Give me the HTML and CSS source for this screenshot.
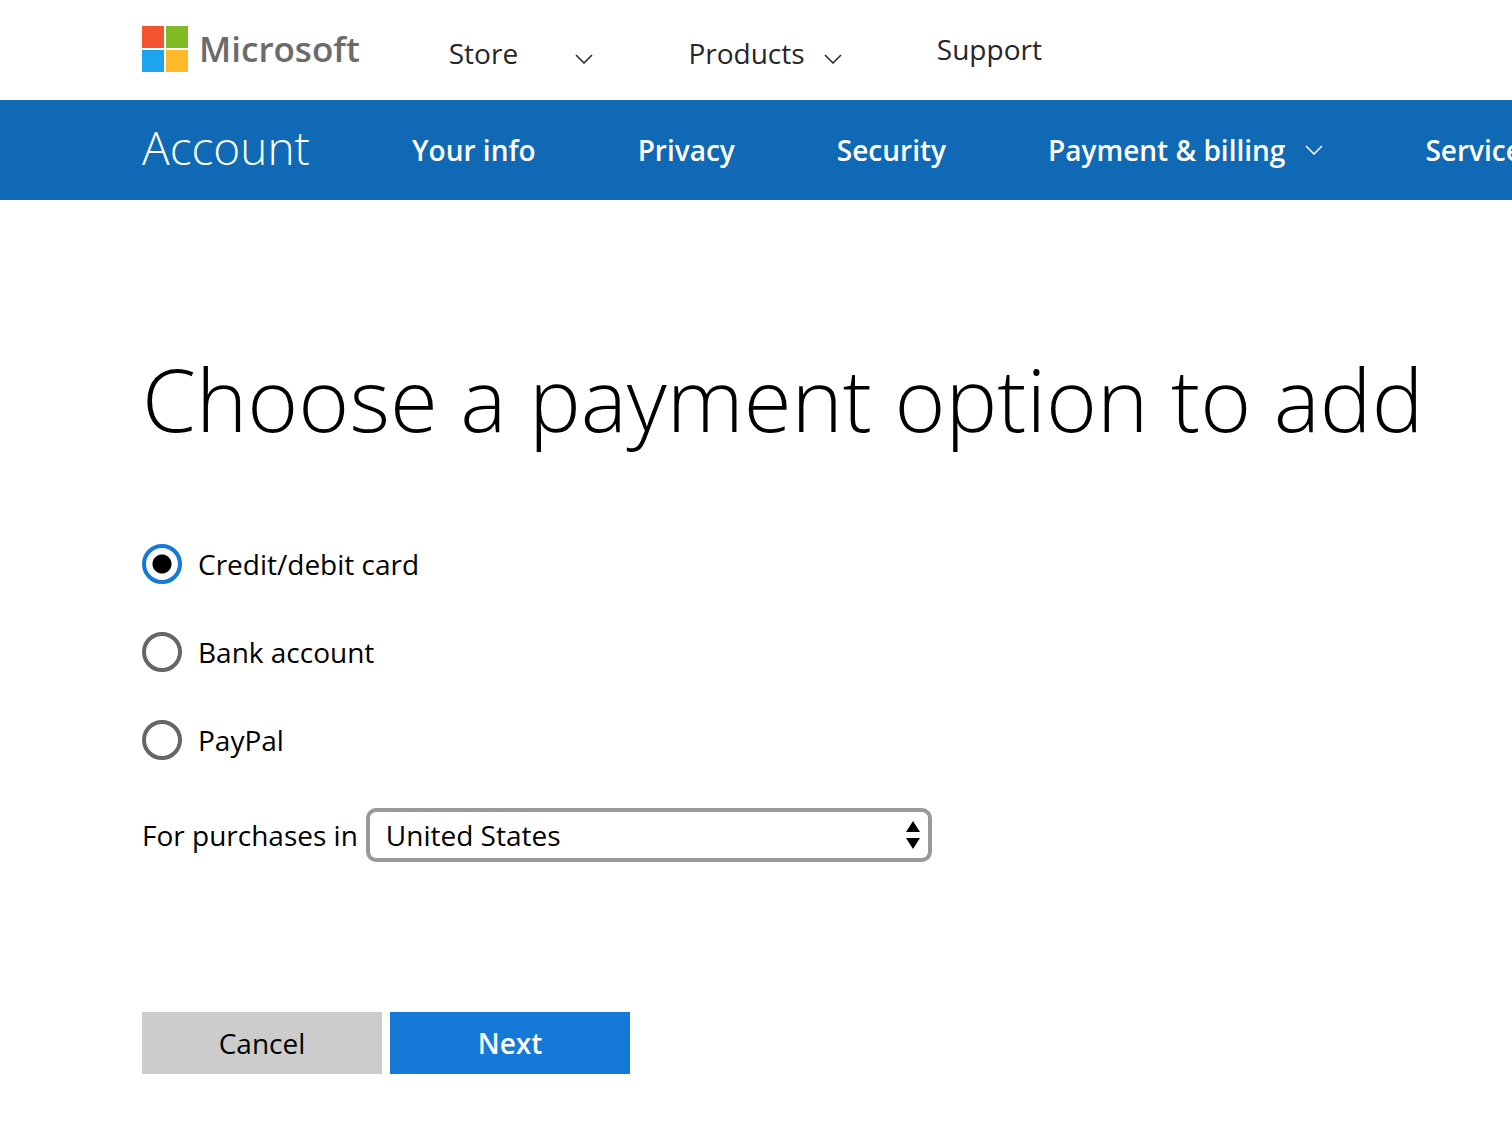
FILE: index.html
```html
<!DOCTYPE html>
<html lang="en">

<head>
    <meta charset="UTF-8">
    <meta name="viewport" content="width=device-width, initial-scale=1.0">
    <title>Payment &amp; billing</title>
    <link rel="stylesheet" href="styles.css">
</head>

<body>
    <header>
        <div class="topbar">
            <a class="logo" href="#">
                <svg width="46" height="46" viewBox="0 0 46 46" aria-hidden="true">
                    <path fill="#f25430" d="M0 0h22v22H0z" />
                    <path fill="#82ba26" d="M24 0h22v22H24z" />
                    <path fill="#1ca5ee" d="M0 24h22v22H0z" />
                    <path fill="#fdb92a" d="M24 24h22v22H24z" />
                </svg>
                <span>Microsoft</span>
            </a>
            <nav class="topnav">
                <a class="store" href="#">Store
                    <svg class="chevron" viewBox="0 0 18 10"><path d="M1 1l8 8 8-8" /></svg>
                </a>
                <a class="products" href="#">Products
                    <svg class="chevron" viewBox="0 0 18 10"><path d="M1 1l8 8 8-8" /></svg>
                </a>
                <a class="support" href="#">Support</a>
            </nav>
        </div>

        <nav class="accountbar">
            <a class="account" href="#">Account</a>
            <a href="#">Your info</a>
            <a href="#">Privacy</a>
            <a href="#">Security</a>
            <a class="billing" href="#">Payment &amp; billing
                <svg class="chevron" viewBox="0 0 18 10"><path d="M1 1l8 8 8-8" /></svg>
            </a>
            <a href="#">Services</a>
        </nav>
    </header>

    <main>
        <h1>Choose a payment option to add</h1>

        <form>
            <div class="option">
                <input type="radio" name="payment" id="card" checked>
                <label for="card">Credit/debit card</label>
            </div>
            <div class="option">
                <input type="radio" name="payment" id="bank">
                <label for="bank">Bank account</label>
            </div>
            <div class="option">
                <input type="radio" name="payment" id="paypal">
                <label for="paypal">PayPal</label>
            </div>

            <div class="country">
                <label for="country">For purchases in</label>
                <div class="selectBox">
                    <select id="country">
                        <option>United States</option>
                    </select>
                    <svg class="arrows" width="14" height="28" viewBox="0 0 14 28" aria-hidden="true">
                        <path d="M7 0l7 11H0zM7 28l7-11H0z" />
                    </svg>
                </div>
            </div>

            <div class="buttons">
                <button type="button" class="cancel">Cancel</button>
                <button type="submit" class="next">Next</button>
            </div>
        </form>
    </main>
</body>

</html>
```

FILE: styles.css
```css
body {
    margin: 0;
    background: #fff;
    color: #000;
    font-family: "Open Sans", "Noto Sans", sans-serif;
    font-size: 28px;
    line-height: 40px;
    overflow-x: hidden;
}

a {
    color: inherit;
    text-decoration: none;
    white-space: nowrap;
}

.topbar {
    display: flex;
    align-items: center;
    height: 98px;
    padding: 0 0 2px 142px;
    color: #262626;
}

.logo {
    display: flex;
    align-items: center;
    gap: 11px;
    color: #6b6b6b;
    font-size: 35px;
    font-weight: 600;
}

.topnav {
    display: flex;
    margin-left: 89px;
    padding-top: 4px;
}

.chevron {
    width: 18px;
    height: 10px;
    fill: none;
    stroke: currentColor;
    stroke-width: 1.5;
}

.store,
.products {
    padding-top: 4px;
}

.store .chevron {
    margin-left: 50px;
}

.products .chevron {
    margin-left: 12px;
}

.products,
.support {
    margin-left: 95px;
}

.accountbar {
    display: flex;
    align-items: center;
    gap: 102px;
    height: 100px;
    padding-left: 142px;
    background: #1069b5;
    color: #fff;
    font-weight: 600;
    overflow: hidden;
}

.account {
    padding-bottom: 6px;
    font-size: 46px;
    font-weight: 300;
}

.billing {
    display: flex;
    align-items: center;
    gap: 20px;
}

main {
    padding: 134px 80px 68px 142px;
}

h1 {
    margin: 0 0 82px;
    font-size: 87px;
    font-weight: 300;
    line-height: 128px;
    white-space: nowrap;
}

.option {
    display: flex;
    align-items: center;
    gap: 16px;
    margin-bottom: 48px;
}

.option input {
    appearance: none;
    width: 40px;
    height: 40px;
    margin: 0;
    border: 4px solid #666;
    border-radius: 50%;
    background: #fff;
}

.option input:checked {
    border-color: #1479d7;
    background: radial-gradient(circle, #000 9px, #fff 10px);
}

.country {
    display: flex;
    align-items: center;
    gap: 8px;
}

.selectBox {
    position: relative;
    width: 566px;
}

select {
    appearance: none;
    width: 100%;
    height: 54px;
    padding: 0 16px;
    border: 4px solid #999;
    border-radius: 10px;
    background: #fff;
    color: #000;
    font: inherit;
}

.arrows {
    position: absolute;
    right: 12px;
    top: 13px;
    pointer-events: none;
}

.buttons {
    display: flex;
    gap: 8px;
    margin-top: 150px;
}

button {
    width: 240px;
    height: 62px;
    padding: 0;
    border: 0;
    font: inherit;
}

.cancel {
    background: #ccc;
    color: #000;
}

.next {
    background: #1479d7;
    color: #fff;
    font-weight: 600;
}
```
